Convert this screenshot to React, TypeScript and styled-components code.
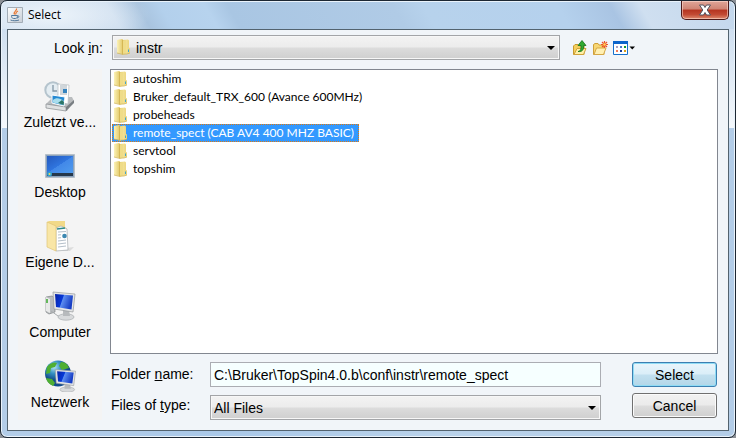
import React from "react";
import styled, { createGlobalStyle } from "styled-components";

const Global = createGlobalStyle`
  *, *::before, *::after { box-sizing: border-box; }
  body { margin: 0; background: #8c9096; font-family: "Liberation Sans", Arial, sans-serif; font-size: 14px; color: #000; }
  button, input, select { font: inherit; color: inherit; margin: 0; }
`;

const Window = styled.div`
  min-height: 100vh;
  display: flex;
  flex-direction: column;
  padding: 0 6px 6px;
  border: 1px solid #1c2733;
  border-radius: 7px;
  box-shadow: inset 0 0 0 1px #eaf3fb;
  background:
    radial-gradient(ellipse 100px 30px at 50px 14px, rgba(240, 246, 251, 0.9), rgba(240, 246, 251, 0)) 0 0 / 100% 28px no-repeat,
    linear-gradient(to bottom, #cfdff0 0, #f4f8fc 100%) 0 28px / 100% 99px no-repeat,
    linear-gradient(60deg, #cfdff0 0, #cbdcee 16%, #a9c4df 20%, #b3d0ec 23%, #b7d3ee 29%, #a9c6e3 32%, #b0cbe6 54%, #b7d2ec 58%, #b5d1ed 76%, #a9c4e3 83%, #cfdff0 87%, #c3d7ec 100%) 0 0 / 100% 28px no-repeat,
    linear-gradient(to right, #b3cde8 0, #a9c8e8 30%, #b9d2ea 60%, #b3cde8 100%);
`;

const TitleBar = styled.header`
  display: flex;
  align-items: center;
  gap: 5px;
  height: 28px;
  padding: 0;
`;

const Title = styled.h1`
  flex: 1;
  margin: 0;
  font: 400 12px/16px "Open Sans", "Noto Sans", sans-serif;
`;

const CloseButton = styled.button`
  align-self: flex-start;
  display: grid;
  place-items: center;
  width: 48px;
  height: 19px;
  padding: 0;
  border: 1px solid #4d1a1a;
  border-top: 0;
  border-radius: 0 0 5px 5px;
  background: linear-gradient(#e0a598 0, #cf8474 45%, #b53420 50%, #c24a34 75%, #de8b70 100%);
  box-shadow: inset 0 0 0 1px rgba(255, 225, 215, 0.55);
`;

const Body = styled.main`
  flex: 1;
  display: flex;
  flex-direction: column;
  gap: 9px;
  padding: 5px 10px 10px;
  border: 1px solid #53636f;
  background: #f1f5f9;
`;

const Toolbar = styled.div`
  display: flex;
  align-items: center;
  gap: 9px;
`;

const LookLabel = styled.label`
  width: 85px;
  text-align: right;
`;

const Combo = styled.div`
  position: relative;
  flex: 1;
  min-width: 0;
`;

const ComboSelect = styled.select<{ $withIcon?: boolean }>`
  display: block;
  width: 100%;
  height: 25px;
  padding: 0 24px 0 ${(p) => (p.$withIcon ? 23 : 3)}px;
  appearance: none;
  border: 1px solid #a3a5a8;
  border-radius: 0;
  background: linear-gradient(#f3f3f3 0, #ececec 48%, #dcdcdc 52%, #cfcfcf 100%);
  box-shadow: inset 0 0 0 1px #f7f7f7;
`;

const ComboArrow = styled.svg`
  position: absolute;
  right: 5px;
  top: 11px;
  pointer-events: none;
`;

const ComboIcon = styled.span`
  position: absolute;
  left: 4px;
  top: 4px;
  display: flex;
  pointer-events: none;
`;

const Tools = styled.div`
  display: flex;
  gap: 4px;
  width: 149px;
  padding-left: 3px;
`;

const ToolButton = styled.button`
  display: flex;
  padding: 0;
  border: 0;
  background: none;
`;

const Columns = styled.div`
  flex: 1;
  display: grid;
  grid-template-columns: 84px minmax(0, 1fr);
  gap: 8px;
`;

const Places = styled.nav`
  display: flex;
  flex-direction: column;
  gap: 18px;
  padding-top: 11px;
  background: #f4f4f4;
`;

const Place = styled.button`
  display: flex;
  flex-direction: column;
  align-items: center;
  padding: 0;
  border: 0;
  background: none;
  line-height: 20px;
`;

const Main = styled.div`
  display: flex;
  flex-direction: column;
  gap: 8px;
`;

const FileList = styled.ul`
  flex: 1;
  margin: 0;
  padding: 0 1px;
  list-style: none;
  border: 1px solid #828790;
  background: #fff;
`;

const FileItem = styled.li`
  display: flex;
`;

const FileButton = styled.button<{ $selected?: boolean }>`
  display: flex;
  align-items: center;
  gap: 4px;
  height: 18px;
  padding: 0 4px 0 0;
  border: 1px dotted ${(p) => (p.$selected ? "#e07a10" : "transparent")};
  background: ${(p) => (p.$selected ? "#3399ff" : "none")};
  color: ${(p) => (p.$selected ? "#fff" : "#000")};
  font: 400 12px/16px Lato, "Open Sans", sans-serif;
  white-space: nowrap;
`;

const Footer = styled.form`
  display: flex;
  gap: 31px;
  padding: 0 1px;
`;

const Fields = styled.div`
  flex: 1;
  display: flex;
  gap: 8px;
`;

const Labels = styled.div`
  display: flex;
  flex-direction: column;
  gap: 7px;
  width: 91px;
  line-height: 24px;
`;

const Inputs = styled.div`
  flex: 1;
  min-width: 0;
  display: flex;
  flex-direction: column;
  gap: 8px;
`;

const TextBox = styled.input`
  width: 100%;
  height: 25px;
  padding: 0 3px;
  border: 1px solid #abadb3;
  border-radius: 0;
  background: #f6ffff;
`;

const Actions = styled.div`
  display: flex;
  flex-direction: column;
  gap: 6px;
  width: 85px;
`;

const ActionButton = styled.button<{ $primary?: boolean }>`
  height: 25px;
  padding: 0;
  border: 1px solid ${(p) => (p.$primary ? "#3c7fb1" : "#707070")};
  border-radius: 3px;
  background: ${(p) =>
    p.$primary
      ? "linear-gradient(#e9f5fb 0, #daeef8 48%, #c2e0ef 52%, #b3d6e8 100%)"
      : "linear-gradient(#f2f2f2 0, #ebebeb 48%, #dddddd 52%, #cfcfcf 100%)"};
  box-shadow: inset 0 0 0 1px ${(p) => (p.$primary ? "#8fdcf5" : "#fbfbfb")};
`;

const FolderIcon = () => (
  <svg width="16" height="16" viewBox="0 0 16 16" aria-hidden="true">
    <defs>
      <linearGradient id="fo" x1="0" x2="1">
        <stop offset="0" stopColor="#fbf2b8" />
        <stop offset="1" stopColor="#e2c866" />
      </linearGradient>
      <linearGradient id="fr" x1="0" x2="1">
        <stop offset="0" stopColor="#d9bc58" />
        <stop offset="0.400" stopColor="#f3e295" />
        <stop offset="1" stopColor="#ead27a" />
      </linearGradient>
    </defs>
    <path d="M7 1l5-.5 1 1V9l1 .5V14l-3 1H7z" fill="url(#fr)" />
    <path d="M1 1l5-1 1 .5v14L6 15l-5-1z" fill="url(#fo)" />
    <path d="M6.500 1.500L10 1v13.500L6.500 16z" fill="#efdc88" />
    <path d="M6.500 1v14.500" stroke="#cfb04a" strokeWidth="0.800" />
    <path d="M1 14l5 1.300L11 15l3-1" fill="none" stroke="#cdb055" strokeWidth="0.700" />
    <path d="M12.500 10.500v2.500" stroke="#3fa5cf" />
  </svg>
);

const JavaIcon = () => (
  <svg width="16" height="16" viewBox="0 0 16 16" aria-hidden="true">
    <defs>
      <linearGradient id="jv" x1="0" y1="0" x2="1" y2="1">
        <stop offset="0" stopColor="#fff" />
        <stop offset="1" stopColor="#c7ced6" />
      </linearGradient>
    </defs>
    <path d="M.5.500h15v15H.500z" fill="url(#jv)" stroke="#a3adb7" />
    <path d="M9.500 1.500c1 2.500-4 3-2 6M11 4C8 5.500 9.500 6 8.500 7.500" fill="none" stroke="#e8742c" strokeWidth="1.200" />
    <path d="M4.500 8.500h6c0 1.500-.5 3-2 3H6.500c-1.500 0-2-1.500-2-3zM10.500 9c2-.5 2 1.500-.5 2M3.500 13c2 1 6.500 1 8.500 0" fill="none" stroke="#50779b" />
  </svg>
);

const UpFolderIcon = () => (
  <svg width="16" height="16" viewBox="0 0 16 16" aria-hidden="true">
    <path d="M1.500 14.500V6l1.500-1.500h3L7.500 6H12v8.500z" fill="#f4cf5e" stroke="#c99a2e" />
    <path d="M2 14.500L5 8.500h9l-2.500 6z" fill="#fff0a8" stroke="#d1a33c" />
    <path d="M6 11.500c3-.5 3-2.500 3-6H6L10 .5 14 5.500h-2.300c0 4-1 6.500-5.700 6z" fill="#31aa31" stroke="#137018" strokeWidth="0.800" />
  </svg>
);

const NewFolderIcon = () => (
  <svg width="16" height="16" viewBox="0 0 16 16" aria-hidden="true">
    <path d="M1.500 14.500V4.500L3 3.500h3l1 1.500h5v9.500z" fill="#f7d775" stroke="#cf9f39" />
    <path d="M2 14.500L4.500 8h9.500l-2.500 6.500z" fill="#fff0b3" stroke="#d5a745" />
    <path d="M12.500 1v7M9 4.500h7M10 2l5 5M15 2l-5 5" stroke="#ee5428" strokeWidth="1.200" />
    <circle cx="12.500" cy="4.500" r="1.300" fill="#ffd55c" />
  </svg>
);

const ViewIcon = () => (
  <svg width="23" height="16" viewBox="0 0 23 16" aria-hidden="true">
    <path d="M1.500 1.500h14v13h-14z" fill="#fff" stroke="#1670cc" />
    <path d="M1 1h15v3H1z" fill="#0c65cb" />
    <path d="M4 6h2v2H4z" fill="#aaa0c0" />
    <path d="M8 6h2v2H8z" fill="#487acb" />
    <path d="M12 6h2v2h-2z" fill="#149a28" />
    <path d="M4 10h2v2H4z" fill="#f07a58" />
    <path d="M8 10h2v2H8z" fill="#143c99" />
    <path d="M12 10h2v2h-2z" fill="#d8a018" />
    <path d="M17.500 6.500H23L20.250 9.500z" />
  </svg>
);

const RecentIcon = () => (
  <svg width="32" height="32" viewBox="0 0 32 32" aria-hidden="true">
    <path d="M2 24l7-7h19l2 4-7 10z" fill="#b9bcbe" />
    <path d="M2 24l20 3v4L2 28z" fill="#dfe1e2" stroke="#85898c" strokeWidth="0.700" />
    <path d="M22 27l8-7v3l-8 8z" fill="#797e82" />
    <circle cx="9" cy="10" r="7.700" fill="#e4edf2" stroke="#b5c4cd" strokeWidth="2" />
    <path d="M9 5v6h4" fill="none" stroke="#8297a6" strokeWidth="1.300" />
    <path d="M14 4l11 1-1 19-10-2z" fill="#fff" stroke="#b4bbc0" strokeWidth="0.700" />
    <path d="M16 6h7M16 8h7M16 10h3M16 12h3M16 14h7" stroke="#8b99a5" strokeWidth="0.800" />
    <path d="M19 9h4v4h-4z" fill="#3684bf" />
    <path d="M8 15l13 2-1 9-12-3z" fill="#2489d2" stroke="#fff" />
    <path d="M9 20c3-3 7-2 11 1l-.5 4L9 22.500z" fill="#a8dded" />
    <path d="M14 23l4-3 2 2-.5 3z" fill="#2c7566" />
  </svg>
);

const DesktopIcon = () => (
  <svg width="32" height="32" viewBox="0 0 32 32" aria-hidden="true">
    <defs>
      <linearGradient id="dt" x1="0" y1="0" x2="1" y2="1">
        <stop offset="0" stopColor="#2459bd" />
        <stop offset="0.500" stopColor="#2f75df" />
        <stop offset="0.510" stopColor="#4288e8" />
        <stop offset="1" stopColor="#4f9bee" />
      </linearGradient>
    </defs>
    <path d="M1.500 4.500h29v23h-29z" fill="#8ba3bd" stroke="#b7c0c9" />
    <path d="M3 6h26v17H3z" fill="url(#dt)" />
    <path d="M3 23h26v3H3z" fill="#26384b" />
    <circle cx="5.500" cy="24" r="2.500" fill="#2d9fd0" />
    <circle cx="5.500" cy="24" r="1" fill="#f5d860" />
  </svg>
);

const DocumentsIcon = () => (
  <svg width="32" height="32" viewBox="0 0 32 32" aria-hidden="true">
    <path d="M22 28l8-1-4 4h-8z" fill="#dcdcdc" />
    <path d="M3 2l2-1h16v6l2 2v20l-11 2z" fill="#f1d988" />
    <path d="M12 8l5-2 6 3 1 21-12 1z" fill="#fff" stroke="#a6acb0" strokeWidth="0.700" />
    <path d="M13 9l8-1" stroke="#2d8b8a" strokeWidth="1.600" />
    <path d="M14 12l8-.5M14 15l3-.3M14 18l3-.3M14 21l8-1M14 24l8-1M14 27l8-1" stroke="#a1afbb" strokeWidth="0.800" />
    <circle cx="20.500" cy="16" r="2.300" fill="#3c88b1" />
    <path d="M3 2l9 4v25l-9-4z" fill="#f9e6a6" stroke="#dfc475" strokeWidth="0.700" />
  </svg>
);

const Monitor = ({ id }: { id: string }) => (
  <>
    <defs>
      <linearGradient id={id} x1="0" y1="0" x2="1" y2="0.300">
        <stop offset="0" stopColor="#0822a5" />
        <stop offset="0.450" stopColor="#0739d8" />
        <stop offset="0.500" stopColor="#5c8df0" />
        <stop offset="1" stopColor="#173ec5" />
      </linearGradient>
    </defs>
    <ellipse cx="22" cy="27" rx="8" ry="3.200" fill="#d8dadc" stroke="#a8acaf" strokeWidth="0.700" />
    <path d="M19 20h6l1 6h-7z" fill="#b7babd" />
    <path d="M9 2l22 2-2 18-19-3z" fill="#e4e5e6" stroke="#95999c" strokeWidth="0.700" />
    <path d="M11 4l18 1.500-1.500 14L12 17z" fill={`url(#${id})`} />
  </>
);

const ComputerIcon = () => (
  <svg width="32" height="32" viewBox="0 0 32 32" aria-hidden="true">
    <path d="M2 7l6-1 3 2v14l-6 2-3-2z" fill="#b9bcbe" stroke="#7e8285" strokeWidth="0.700" />
    <path d="M2 7l4 2v14l-4-2z" fill="#e8e9e9" />
    <path d="M3 9v4" stroke="#38a72c" strokeWidth="1.500" />
    <path d="M7 21l7 5 7 0" fill="none" stroke="#a9adb0" />
    <Monitor id="cm" />
  </svg>
);

const NetworkIcon = () => (
  <svg width="32" height="32" viewBox="0 0 32 32" aria-hidden="true">
    <defs>
      <radialGradient id="gl" cx="0.350" cy="0.250">
        <stop offset="0" stopColor="#b4e7f6" />
        <stop offset="0.500" stopColor="#3691c2" />
        <stop offset="1" stopColor="#124b8b" />
      </radialGradient>
    </defs>
    <circle cx="14" cy="13.500" r="13" fill="url(#gl)" />
    <path d="M3 7c4-5 8-5 10-4l-2 4-4 1-1 5-4 1zM2 18l6 1 3 4-2 3c-4-2-6-4-7-8zM17 2c5 0 7 3 8 6l-7 2-3-4z" fill="#4faf32" />
    <g transform="translate(3 8) scale(0.920 0.800)">
      <Monitor id="nm" />
    </g>
  </svg>
);

const Arrow = () => (
  <ComboArrow width="8" height="4" viewBox="0 0 8 4" aria-hidden="true">
    <path d="M0 0h8L4 4z" />
  </ComboArrow>
);

const places = [
  { name: "Zuletzt ve...", Icon: RecentIcon },
  { name: "Desktop", Icon: DesktopIcon },
  { name: "Eigene D...", Icon: DocumentsIcon },
  { name: "Computer", Icon: ComputerIcon },
  { name: "Netzwerk", Icon: NetworkIcon },
];

const files = [
  "autoshim",
  "Bruker_default_TRX_600 (Avance 600MHz)",
  "probeheads",
  "remote_spect (CAB AV4 400 MHZ BASIC)",
  "servtool",
  "topshim",
];

export default function App() {
  const [selected, setSelected] = React.useState(3);
  return (
    <>
      <Global />
      <Window>
        <TitleBar>
          <JavaIcon />
          <Title>Select</Title>
          <CloseButton aria-label="Close">
            <svg width="14" height="12" viewBox="0 0 14 12" aria-hidden="true">
              <path d="M1.500 1h4L7 3.500 8.500 1h4L9.200 6l3.300 5h-4L7 8.500 5.500 11h-4l3.300-5z" fill="#fff" stroke="#53535f" />
            </svg>
          </CloseButton>
        </TitleBar>
        <Body>
          <Toolbar>
            <LookLabel htmlFor="look">Look <u>i</u>n:</LookLabel>
            <Combo>
              <ComboSelect id="look" $withIcon>
                <option>instr</option>
              </ComboSelect>
              <ComboIcon><FolderIcon /></ComboIcon>
              <Arrow />
            </Combo>
            <Tools>
              <ToolButton aria-label="Up one level"><UpFolderIcon /></ToolButton>
              <ToolButton aria-label="New folder"><NewFolderIcon /></ToolButton>
              <ToolButton aria-label="View menu"><ViewIcon /></ToolButton>
            </Tools>
          </Toolbar>
          <Columns>
            <Places>
              {places.map(({ name, Icon }) => (
                <Place key={name}><Icon />{name}</Place>
              ))}
            </Places>
            <Main>
              <FileList>
                {files.map((name, i) => (
                  <FileItem key={name}>
                    <FileButton $selected={i === selected} onClick={() => setSelected(i)}>
                      <FolderIcon />{name}
                    </FileButton>
                  </FileItem>
                ))}
              </FileList>
              <Footer onSubmit={(e) => e.preventDefault()}>
                <Fields>
                  <Labels>
                    <label htmlFor="folder">Folder <u>n</u>ame:</label>
                    <label htmlFor="type">Files of <u>t</u>ype:</label>
                  </Labels>
                  <Inputs>
                    <TextBox id="folder" defaultValue={"C:\\Bruker\\TopSpin4.0.b\\conf\\instr\\remote_spect"} />
                    <Combo>
                      <ComboSelect id="type">
                        <option>All Files</option>
                      </ComboSelect>
                      <Arrow />
                    </Combo>
                  </Inputs>
                </Fields>
                <Actions>
                  <ActionButton $primary type="submit">Select</ActionButton>
                  <ActionButton type="button">Cancel</ActionButton>
                </Actions>
              </Footer>
            </Main>
          </Columns>
        </Body>
      </Window>
    </>
  );
}
